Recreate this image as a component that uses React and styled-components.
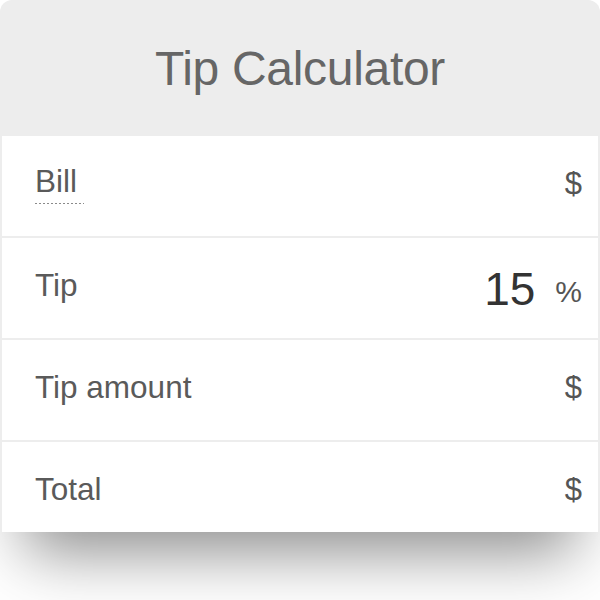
import styled, { createGlobalStyle } from 'styled-components';

const rows = [
    { label: 'Bill', unit: '$', dotted: true },
    { label: 'Tip', value: '15', unit: '%' },
    { label: 'Tip amount', unit: '$' },
    { label: 'Total', unit: '$' }
];

const App = () => {
    return (
        <PageStyled>
            <GlobalStyle />
            <CardStyled>
                <HeaderStyled>
                    <TitleStyled>Tip Calculator</TitleStyled>
                </HeaderStyled>
                <BodyStyled>
                    {rows.map((row) => (
                        <RowStyled key={row.label}>
                            <LabelStyled $dotted={row.dotted}>
                                {row.label}
                            </LabelStyled>
                            <FieldStyled>
                                {row.value && (
                                    <ValueStyled>{row.value}</ValueStyled>
                                )}
                                <UnitStyled $small={row.unit === '%'}>
                                    {row.unit}
                                </UnitStyled>
                            </FieldStyled>
                        </RowStyled>
                    ))}
                </BodyStyled>
            </CardStyled>
        </PageStyled>
    );
};

export default App;

const GlobalStyle = createGlobalStyle`
    html, body {
        margin: 0;
        padding: 0;
        background: #ffffff;
        font-family: "Liberation Sans", Arial, sans-serif;
    }
`;
const PageStyled = styled.main`
    width: 600px;
    height: 600px;
    overflow: hidden;
    background: #ffffff;
`;
const CardStyled = styled.section`
    width: 600px;
    height: 532px;
    box-sizing: border-box;
    display: flex;
    flex-direction: column;
    overflow: hidden;
    border-radius: 12px 12px 0 0;
    background-color: #ededed;
    box-shadow: 0 45px 60px -25px rgba(0, 0, 0, 0.45);
`;
const HeaderStyled = styled.header`
    height: 136px;
    flex-shrink: 0;
    display: flex;
    align-items: center;
    justify-content: center;
`;
const TitleStyled = styled.h1`
    margin: 0;
    font-size: 48px;
    font-weight: normal;
    letter-spacing: -0.3px;
    color: #666666;
`;
const BodyStyled = styled.div`
    display: flex;
    flex-direction: column;
    gap: 2px;
    padding: 0 2px;
`;
const RowStyled = styled.div`
    height: 100px;
    flex-shrink: 0;
    box-sizing: border-box;
    display: flex;
    align-items: center;
    justify-content: space-between;
    padding: 0 16px 5px 33px;
    background-color: #ffffff;
`;
const LabelStyled = styled.span`
    font-size: 31.5px;
    color: #5a5a5a;
    padding: ${(p) => (p.$dotted ? '0 7px 4px 0' : '0')};
    background-image: ${(p) =>
        p.$dotted
            ? 'linear-gradient(to right, #8a8a8a 50%, transparent 50%)'
            : 'none'};
    background-size: 4px 1px;
    background-repeat: repeat-x;
    background-position: 0 100%;
`;
const FieldStyled = styled.div`
    display: flex;
    align-items: baseline;
    gap: 20px;
`;
const ValueStyled = styled.span`
    font-size: 46px;
    color: #333333;
    position: relative;
    top: 3px;
`;
const UnitStyled = styled.span`
    font-size: ${(p) => (p.$small ? '30px' : '31px')};
    color: #555555;
`;
